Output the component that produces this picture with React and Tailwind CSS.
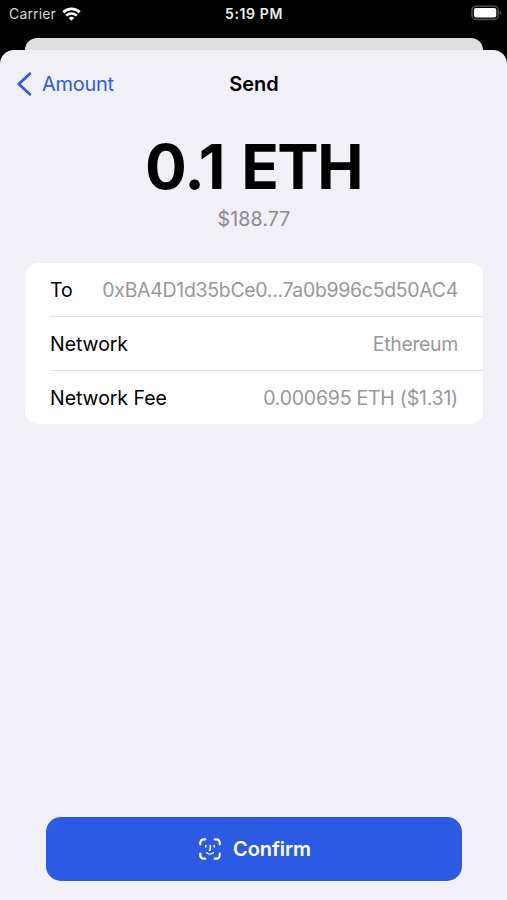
import { useState } from "react";

const rows = [
  { label: "To", value: "0xBA4D1d35bCe0...7a0b996c5d50AC4", tracking: "tracking-[-0.32px]" },
  { label: "Network", value: "Ethereum", tracking: "tracking-[-0.35px]" },
  { label: "Network Fee", value: "0.000695 ETH ($1.31)", tracking: "tracking-[-0.23px]" },
];

function WifiIcon() {
  return (
    <svg width="19" height="14" viewBox="0 0 19 14" fill="none" stroke="#fff" strokeWidth="2.6">
      <path d="M1.3 5.2a11.8 11.8 0 0 1 16.4 0" />
      <path d="M4.2 8.6a7.7 7.7 0 0 1 10.6 0" />
      <path d="M9.5 13.8 6.7 11a4 4 0 0 1 5.6 0z" fill="#fff" stroke="none" />
    </svg>
  );
}

function BatteryIcon() {
  return (
    <svg width="31" height="16" viewBox="0 0 31 16">
      <rect x="1" y="1.2" width="26.2" height="13.2" rx="4" fill="#000" stroke="#4c4c4e" strokeWidth="1.6" />
      <rect x="2.9" y="3.1" width="22.4" height="9.4" rx="2" fill="#fff" />
      <path d="M28.6 5.4c1.5.6 1.9 1.4 1.9 2.4s-.4 1.8-1.9 2.4z" fill="#4c4c4e" />
    </svg>
  );
}

function FaceIdIcon() {
  return (
    <svg width="22" height="22" viewBox="0 0 22 22" fill="none" stroke="#fff" strokeLinecap="round" strokeLinejoin="round">
      <g strokeWidth="2.2">
        <path d="M1.3 6.3V4.6a3.3 3.3 0 0 1 3.3-3.3h1.7" />
        <path d="M15.7 1.3h1.7a3.3 3.3 0 0 1 3.3 3.3v1.7" />
        <path d="M20.7 15.7v1.7a3.3 3.3 0 0 1-3.3 3.3h-1.7" />
        <path d="M6.3 20.7H4.6a3.3 3.3 0 0 1-3.3-3.3v-1.7" />
      </g>
      <g strokeWidth="1.5">
        <path d="M6.8 7.6v1.5" />
        <path d="M15.2 7.6v1.5" />
        <path d="M11.3 7.6v3.8c0 .6-.3.9-1.1.9" />
        <path d="M7.7 14.7c1.8 1.7 4.8 1.7 6.6 0" />
      </g>
    </svg>
  );
}

export default function App() {
  const [confirmed, setConfirmed] = useState(false);

  return (
    <div className="flex h-[900px] w-[507px] flex-col overflow-hidden bg-black font-['Inter',sans-serif]">
      <div className="grid h-[38px] shrink-0 grid-cols-3 pl-[9px] pr-[5px] pt-1">
        <div className="flex h-[19px] items-center gap-[6px]">
          <span className="text-[14px] tracking-[0.15px] text-[#d8d8d8]">Carrier</span>
          <WifiIcon />
        </div>
        <p className="h-5 pr-[3px] text-center text-[14px] font-semibold leading-5 tracking-[0.6px] text-[#ececec]">5:19 PM</p>
        <div className="flex h-[18px] items-center justify-end">
          <BatteryIcon />
        </div>
      </div>

      <div className="ml-[25px] mr-6 h-3 shrink-0 rounded-t-[12px] bg-[#dfdfdf]" />

      <div className="flex flex-1 flex-col rounded-t-[14px] bg-[#f1f0f6]">
        <div className="grid h-[68px] grid-cols-3 items-center px-[17px]">
          <button className="flex items-center gap-[10px] text-[20px] tracking-[-0.3px] text-[#2e5ce5]">
            <svg width="15" height="24" viewBox="0 0 15 24" fill="none" stroke="currentColor" strokeWidth="2.8" strokeLinecap="round" strokeLinejoin="round">
              <path d="M12.8 1.8 1.8 12l11 10.2" />
            </svg>
            Amount
          </button>
          <h1 className="pl-px text-center text-[20px] font-semibold">Send</h1>
        </div>

        <div className="flex flex-col items-center">
          <p className="mt-[14px] h-[70px] text-[62px] font-bold leading-[70px] tracking-[-1.5px] [word-spacing:3px]">
            <span className="tracking-[-0.6px]">0.1</span> ETH
          </p>
          <p className="mt-[5px] pl-px text-[19.5px] leading-6 tracking-[0.15px] text-[#8a8a8e]">$188.77</p>
        </div>

        <div className="ml-[25px] mr-6 mt-8 rounded-[13px] bg-white pl-[25px]">
          {rows.map((row) => (
            <div
              key={row.label}
              className="flex h-[54px] items-center justify-between border-b border-[#e4e4e7] pr-[25px] pt-[3px] text-[19.5px] last:h-[53px] last:border-0"
            >
              <span className="whitespace-nowrap tracking-[-0.05px]">{row.label}</span>
              <span className={`whitespace-nowrap text-[#98989b] ${row.tracking}`}>{row.value}</span>
            </div>
          ))}
        </div>

        <button
          onClick={() => setConfirmed(!confirmed)}
          className="mx-auto mb-[19px] mt-auto flex h-16 w-[416px] items-center justify-center gap-3 rounded-[15px] bg-[#2c5ae3] pl-[3px] text-[20px] font-semibold text-white"
        >
          <FaceIdIcon />
          <span className="tracking-[-0.05px]">Confirm</span>
        </button>
      </div>
    </div>
  );
}
